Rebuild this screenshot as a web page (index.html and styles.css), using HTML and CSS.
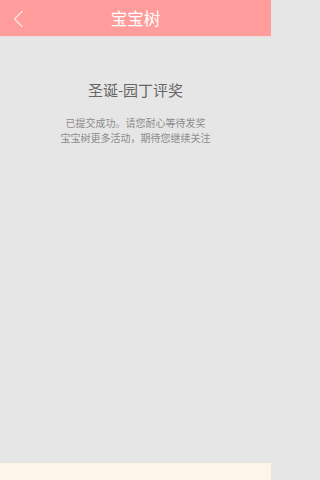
FILE: index.html
```html
<!DOCTYPE html>
<html lang="zh">
<head>
<meta charset="utf-8">
<link rel="stylesheet" href="styles.css">
</head>
<body>
<div class="app">
  <header class="topbar">
    <span class="back">
      <svg width="12" height="18" viewBox="0 0 12 18"><polyline points="10,1.5 2.5,9 10,16.5" fill="none" stroke="#fbe3e3" stroke-width="1.4" stroke-linecap="round" stroke-linejoin="round"/></svg>
    </span>
    <h1 class="title">宝宝树</h1>
  </header>
  <main class="content">
    <h2 class="heading">圣诞-园丁评奖</h2>
    <p class="msg">已提交成功。请您耐心等待发奖<br>宝宝树更多活动，期待您继续关注</p>
  </main>
  <footer class="footer"></footer>
</div>
</body>
</html>
```
FILE: styles.css
```css
html, body {
  margin: 0;
  padding: 0;
}
body {
  font-family: "Noto Sans CJK SC", "Noto Sans", sans-serif;
  background: #e6e6e6;
}
.app {
  width: 271px;
  height: 480px;
  display: flex;
  flex-direction: column;
}
.topbar {
  position: relative;
  height: 36px;
  background: #ff9c9c;
  border-bottom: 1px solid #eedada;
  display: flex;
  align-items: center;
  justify-content: center;
  flex-shrink: 0;
}
.back {
  position: absolute;
  left: 12px;
  top: 10px;
  width: 12px;
  height: 18px;
  display: block;
}
.back svg {
  display: block;
}
.title {
  margin: 0;
  font-size: 16.5px;
  font-weight: normal;
  color: #ffffff;
  line-height: 36px;
}
.content {
  flex: 1;
  background: #e6e6e6;
  display: flex;
  flex-direction: column;
  align-items: center;
  padding-top: 42px;
}
.heading {
  margin: 0;
  font-size: 15px;
  font-weight: normal;
  color: #666666;
  line-height: 22px;
}
.msg {
  margin: 15px 0 0;
  font-size: 10px;
  line-height: 14.5px;
  color: #8c8c8c;
  text-align: center;
}
.footer {
  height: 17px;
  background: #fdf5e8;
  flex-shrink: 0;
}
```
